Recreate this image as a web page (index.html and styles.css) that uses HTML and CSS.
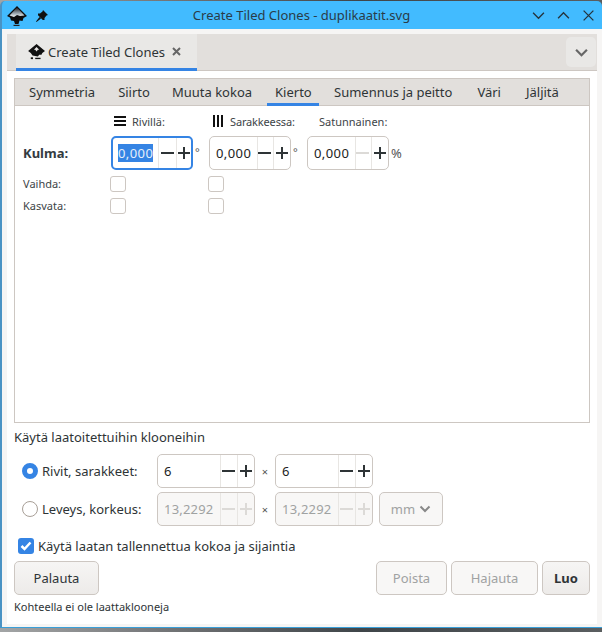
FILE: index.html
```html
<!DOCTYPE html>
<html lang="fi">
<head>
<meta charset="utf-8">
<title>Create Tiled Clones</title>
<link rel="stylesheet" href="styles.css">
</head>
<body>
<div class="window">
  <header class="titlebar">
    <div class="tb-left">
      <svg class="logo" viewBox="0 0 22 20"><defs><linearGradient id="lg" x1="0" y1="0" x2="0" y2="1"><stop offset="0" stop-color="#1c1c20"/><stop offset="0.55" stop-color="#8f9aa3"/><stop offset="1" stop-color="#f4f8fa"/></linearGradient></defs><path d="M11 0 21 10 17.500 12 16.500 15 13.500 14.500 12.500 18 9 18 8 15 5 14.500 4 11.500 1 10Z" fill="#0c0c0e"/><path d="M11 1.500 18.500 9.500 14 10 11 9 8 11 3.500 9.500Z" fill="url(#lg)"/><rect x="7.500" y="18.800" width="6" height="1.200" fill="#222"/></svg>
      <svg class="pin" viewBox="0 0 12 12"><path d="M7 0 12 5 10.500 5.500 8.500 8 8.500 10 6.800 10 2 5.200 2 3.500 4 3.500 6.500 1.500Z M3.500 7 5 8.500 0.500 12 0 11.500Z" fill="#111"/></svg>
    </div>
    <div class="tb-title">Create Tiled Clones - duplikaatit.svg</div>
    <div class="tb-right">
      <svg class="wm" viewBox="0 0 12 8"><path d="M1 1.500 6 6.500 11 1.500" /></svg>
      <svg class="wm" viewBox="0 0 12 8"><path d="M1 6.500 6 1.500 11 6.500" /></svg>
      <svg class="wm wm-x" viewBox="0 0 12 12"><path d="M1.500 1.500 10.500 10.500M10.500 1.500 1.500 10.500" /></svg>
    </div>
  </header>
  <div class="content">
    <div class="inner">
      <div class="dockbar">
        <div class="docktab">
          <svg class="tab-logo" viewBox="0 0 20 18"><path d="M9.500 0 19 8 16 10 15 12 12.500 12 11 14 8 13.500 5 13 3 10 0 8Z" fill="#111"/><path d="M9.500 3.500 12.500 6.500 11 6.500 9.500 8.500 8 6.500 6.500 6.500Z" fill="#e9e8e6"/><rect x="3" y="15" width="2.500" height="2" fill="#111"/><rect x="8" y="15.500" width="6" height="1.500" fill="#111"/></svg>
          <span class="docktab-label">Create Tiled Clones</span>
          <svg class="tab-close" viewBox="0 0 9 9"><path d="M1 1 8 8M8 1 1 8"/></svg>
        </div>
        <div class="dock-menu"><svg viewBox="0 0 12 8"><path d="M1 1.500 6 6.500 11 1.500"/></svg></div>
      </div>
      <div class="main">
        <div class="notebook">
          <nav class="tabs">
            <span class="tab t1">Symmetria</span>
            <span class="tab t2">Siirto</span>
            <span class="tab t3">Muuta kokoa</span>
            <span class="tab t4 active">Kierto</span>
            <span class="tab t5">Sumennus ja peitto</span>
            <span class="tab t6">Väri</span>
            <span class="tab t7">Jäljitä</span>
          </nav>
          <div class="page">
            <div class="heads">
              <div class="head h1"><svg class="hicon" viewBox="0 0 12 10"><path d="M0 0h12v2H0zM0 4h12v2H0zM0 8h12v2H0z"/></svg><span>Rivillä:</span></div>
              <div class="head h2"><svg class="hicon hicon-col" viewBox="0 0 10 12"><path d="M0 0h2v12H0zM4 0h2v12H4zM8 0h2v12H8z"/></svg><span>Sarakkeessa:</span></div>
              <div class="head h3"><span>Satunnainen:</span></div>
            </div>
            <div class="angle-row">
              <span class="kulma">Kulma:</span>
              <div class="spin spin-s focus"><span class="val"><span class="sel">0,000</span></span><span class="sb minus"></span><span class="sb plus"></span></div>
              <span class="unit u1">°</span>
              <div class="spin spin-s"><span class="val">0,000</span><span class="sb minus"></span><span class="sb plus"></span></div>
              <span class="unit u2">°</span>
              <div class="spin spin-s"><span class="val">0,000</span><span class="sb minus off"></span><span class="sb plus"></span></div>
              <span class="unit u3">%</span>
            </div>
            <div class="chk-row first"><span class="chk-label">Vaihda:</span><span class="cb"></span><span class="cb cb2"></span></div>
            <div class="chk-row"><span class="chk-label">Kasvata:</span><span class="cb"></span><span class="cb cb2"></span></div>
          </div>
        </div>
        <div class="section-title">Käytä laatoitettuihin klooneihin</div>
        <div class="size-row r1">
          <span class="radio on"></span><span class="rlabel">Rivit, sarakkeet:</span>
          <div class="spin spin-l"><span class="val">6</span><span class="sb minus"></span><span class="sb plus"></span></div>
          <span class="times">×</span>
          <div class="spin spin-l"><span class="val">6</span><span class="sb minus"></span><span class="sb plus"></span></div>
        </div>
        <div class="size-row r2">
          <span class="radio"></span><span class="rlabel">Leveys, korkeus:</span>
          <div class="spin spin-l dis"><span class="val">13,2292</span><span class="sb minus off"></span><span class="sb plus off"></span></div>
          <span class="times">×</span>
          <div class="spin spin-l dis"><span class="val">13,2292</span><span class="sb minus off"></span><span class="sb plus off"></span></div>
          <div class="unit-select">mm<svg viewBox="0 0 12 8"><path d="M1.500 1.500 6 6 10.500 1.500"/></svg></div>
        </div>
        <label class="saved"><span class="cb-on"><svg viewBox="0 0 12 10"><path d="M1.500 5 4.500 8 10.500 1.500"/></svg></span><span>Käytä laatan tallennettua kokoa ja sijaintia</span></label>
        <div class="actions">
          <button class="btn b-reset">Palauta</button>
          <span class="grow"></span>
          <button class="btn b-del" disabled>Poista</button>
          <button class="btn b-unc" disabled>Hajauta</button>
          <button class="btn b-luo">Luo</button>
        </div>
        <div class="status">Kohteella ei ole laattaklooneja</div>
      </div>
    </div>
  </div>
</div>
</body>
</html>
```
FILE: styles.css
```css
* { box-sizing: border-box; }
html, body { margin: 0; padding: 0; }
body {
  width: 602px; height: 632px; overflow: hidden;
  background: linear-gradient(90deg, #a3a5a6 0, #6f7173 30%, #3f4549 60%, #5a5e60 100%);
  font-family: "Noto Sans", sans-serif;
  color: #2e3436;
  font-size: 13px;
}
.window {
  width: 602px; height: 627px;
  background: #42bbff;
  border-radius: 5px 5px 0 0;
  border-left: 2px solid #4a93c4;
  border-bottom: 1px solid #3a9fd8;
  display: flex; flex-direction: column;
  margin-top: 1px;
}
.titlebar {
  height: 28px; flex: none;
  display: flex; align-items: center; justify-content: space-between;
  position: relative;
}
.tb-left { display: flex; align-items: center; gap: 9px; padding-left: 4px; padding-top: 1px; }
.logo { width: 22px; height: 20px; display: block; }
.pin { width: 12px; height: 12px; display: block; margin-left: -1px; }
.tb-title {
  position: absolute; left: 0; right: 1px; text-align: center;
  font-size: 13px; line-height: 28px; color: #2a3c48;
}
.tb-right { display: flex; align-items: center; gap: 12px; padding-right: 7px; }
.wm { width: 13px; height: 9px; display: block; fill: none; stroke: #25333c; stroke-width: 1.200; }
.wm-x { height: 13px; width: 13px; }
.content { flex: 1; background: #f6f5f4; padding: 5px 5px 3px 5px; display: flex; flex-direction: column; min-height: 0; }
.inner { flex: 1; background: #fff; display: flex; flex-direction: column; min-height: 0; }
.dockbar {
  height: 37px; flex: none;
  background: #e2dfdc; border-bottom: 1px solid #cdc7c2;
  display: flex; align-items: flex-start; justify-content: space-between;
  padding-left: 9px;
}
.docktab {
  width: 181px; height: 37px; background: #e9e8e6;
  border-bottom: 3px solid #3584e4;
  display: flex; align-items: center;
  padding-left: 12px; padding-top: 1px;
}
.tab-logo { width: 18px; height: 16px; display: block; }
.docktab-label { font-size: 13px; margin-left: 2px; }
.tab-close { width: 9px; height: 9px; margin-left: 7px; fill: none; stroke: #666; stroke-width: 2; }
.dock-menu {
  width: 30px; height: 30px; margin-top: 3px; margin-right: 1px;
  background: #e9e8e6; border-radius: 5px;
  display: flex; align-items: center; justify-content: center;
}
.dock-menu svg { width: 13px; height: 9px; fill: none; stroke: #666; stroke-width: 2; }
.main { flex: 1; padding: 7px 7px 0 7px; display: flex; flex-direction: column; }
.notebook {
  height: 345px; flex: none;
  border: 1px solid #cdc7c2;
  display: flex; flex-direction: column;
}
.tabs {
  height: 27px; flex: none; background: #e2dfdc; border-bottom: 1px solid #cdc7c2;
  display: flex; padding-left: 14px; font-size: 13px;
}
.tab { line-height: 27px; height: 27px; white-space: nowrap; }
.t2 { margin-left: 23px; }
.t3 { margin-left: 22px; }
.t4 { margin-left: 15px; padding: 0 8px; width: 52px; text-align: center; border-bottom: 3px solid #3584e4; }
.t5 { margin-left: 15px; }
.t6 { margin-left: 25px; }
.t7 { margin-left: 25px; }
.page { flex: 1; background: #fff; }
.heads { display: flex; height: 30px; align-items: center; font-size: 11px; }
.head { display: flex; align-items: center; color: #3d4447; }
.hicon { width: 12px; height: 10px; fill: #111; display: block; }
.hicon-col { width: 10px; height: 12px; }
.h1 { margin-left: 99px; width: 99px; gap: 6px; }
.h2 { width: 106px; gap: 7px; letter-spacing: -0.15px; }
.angle-row { display: flex; align-items: center; height: 34px; }
.kulma { padding-left: 8px; width: 96px; font-weight: 700; font-size: 13px; color: #333b3f; flex: none; }
.spin {
  display: flex; height: 34px; background: #fff;
  border: 1px solid #cdc7c2; border-radius: 5px; flex: none;
  font-size: 13px;
}
.spin-s { width: 82px; }
.spin-l { width: 98px; }
.spin.focus { border: 2px solid #3584e4; }
.val { flex: 1; display: flex; align-items: center; padding-left: 6px; min-width: 0; white-space: nowrap; color: #222; letter-spacing: 0.4px; }
.spin.focus .val { padding-left: 5px; }
.sel { background: #3584e4; color: #e6effa; line-height: 18px; }
.sb {
  flex: none; border-left: 1px solid #e8e6e3;
  position: relative; color: #2e3436;
}
.sb.off { color: #dcdad7; }
.minus { width: 16px; }
.plus { width: 17px; }
.spin-l .minus { width: 17px; }
.spin.focus .minus { width: 18px; }
.spin.focus .plus { width: 15px; }
.minus::before, .plus::before, .plus::after {
  content: ""; position: absolute; background: currentColor;
}
.minus::before { left: 0; width: 13px; top: 50%; height: 2px; margin-top: -1px; }
.spin-l .minus::before { left: 1px; }
.spin.focus .minus::before { left: 2px; }
.plus::before { left: 2px; width: 12px; top: 50%; height: 2px; margin-top: -1px; }
.plus::after { left: 7px; width: 2px; top: 50%; height: 12px; margin-top: -6px; }
.spin.focus .plus::before { left: 1px; }
.spin.focus .plus::after { left: 6px; }
.unit { font-size: 11px; flex: none; color: #555; }
.u1, .u2 { width: 16px; padding-left: 2px; margin-top: -3px; }
.u3 { padding-left: 2px; font-size: 13px; }
.chk-row { display: flex; align-items: center; height: 16px; margin-bottom: 6px; font-size: 11px; }
.chk-row.first { margin-top: 6px; }
.chk-label { width: 95px; padding-left: 8px; padding-bottom: 2px; flex: none; color: #3d4447; }
.cb { width: 16px; height: 16px; border: 1px solid #cdc7c2; border-radius: 3px; background: #fff; flex: none; }
.cb2 { margin-left: 82px; }
.section-title { margin-top: 5px; height: 18px; line-height: 18px; font-size: 13px; }
.size-row { display: flex; align-items: center; height: 34px; }
.r1 { margin-top: 8px; }
.r2 { margin-top: 4px; }
.radio { width: 16px; height: 16px; border-radius: 50%; border: 1px solid #a89f97; background: #fff; margin-left: 8px; flex: none; }
.radio.on { border: 5px solid #3584e4; }
.rlabel { width: 119px; padding-left: 4px; flex: none; }
.times { width: 20px; text-align: center; font-size: 11px; color: #555; flex: none; }
.dis { background: #f8f7f6; }
.dis .val { color: #a0a2a2; letter-spacing: 0.2px; }
.unit-select {
  width: 64px; height: 34px; margin-left: 6px;
  border: 1px solid #cdc7c2; border-radius: 5px; background: #f8f7f6;
  display: flex; align-items: center; justify-content: center; gap: 4px;
  color: #a0a2a2; font-size: 13px;
}
.unit-select svg { width: 12px; height: 8px; fill: none; stroke: #888; stroke-width: 2; }
.saved { display: flex; align-items: center; margin-top: 10px; height: 20px; padding-left: 4px; gap: 4px; font-size: 13px; }
.cb-on { width: 16px; height: 16px; border-radius: 3px; background: #3584e4; display: flex; align-items: center; justify-content: center; flex: none; }
.cb-on svg { width: 12px; height: 10px; fill: none; stroke: #fff; stroke-width: 2.500; }
.actions { display: flex; height: 34px; margin-top: 5px; gap: 4px; }
.grow { flex: 1; }
.btn {
  font-family: inherit; font-size: 13px; color: #2e3436;
  height: 34px; padding: 0; border: 1px solid #cdc7c2; border-radius: 5px;
  background: linear-gradient(#f6f5f4, #edebe9);
}
.btn:disabled { background: #f8f7f6; color: #a0a2a2; }
.b-reset { width: 85px; }
.b-del { width: 71px; }
.b-unc { width: 87px; }
.b-luo { width: 48px; font-weight: 700; }
.status { margin-top: 4px; font-size: 11px; height: 16px; line-height: 16px; }
```
